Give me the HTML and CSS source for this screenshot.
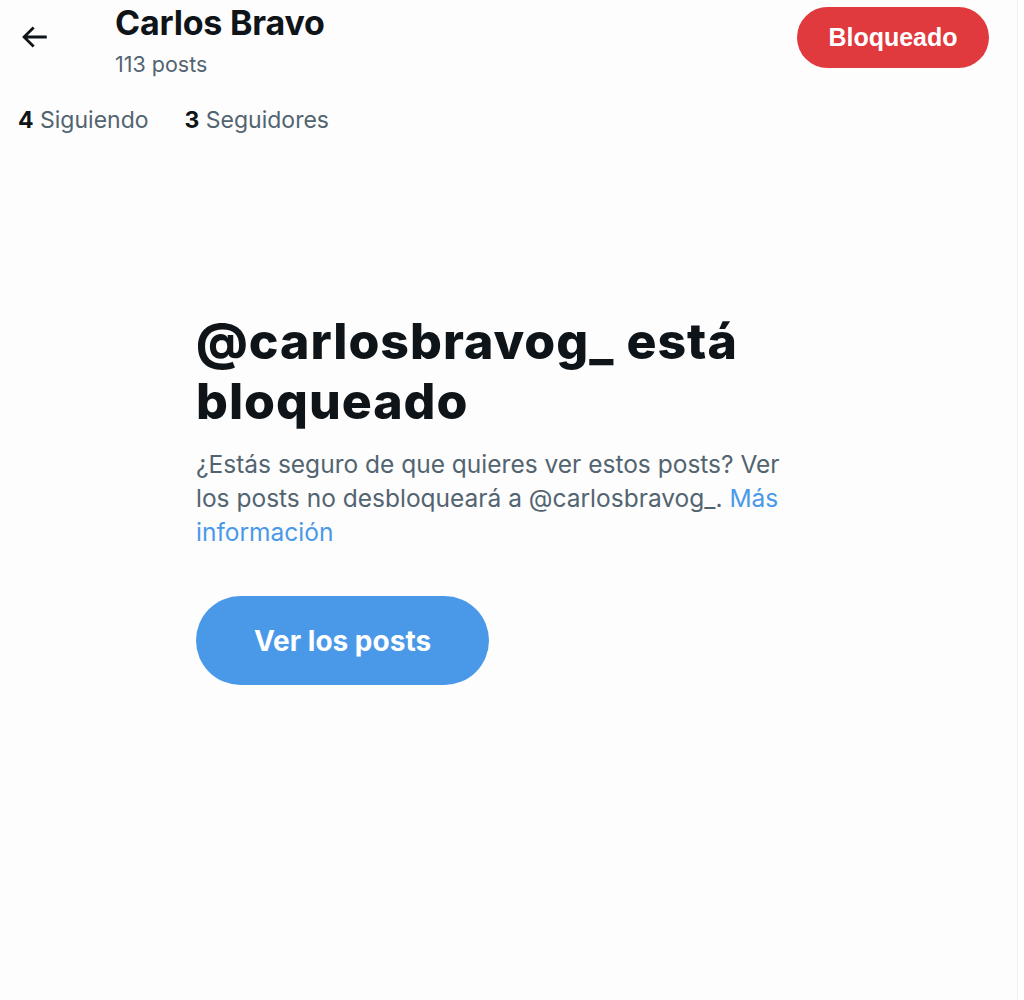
FILE: index.html
```html
<!DOCTYPE html>
<html lang="es">
  <head>
    <meta charset="UTF-8" />
    <meta name="viewport" content="width=device-width, initial-scale=1.0" />
    <title>Carlos Bravo</title>
    <link rel="stylesheet" href="styles.css">
  </head>

  <body>
    <main>
      <header class="top-bar">
        <button class="back" aria-label="Atrás">
          <svg viewBox="0 0 24 24" width="34" height="34">
            <path d="M7.414 13l5.043 5.04-1.414 1.42L3.586 12l7.457-7.46 1.414 1.42L7.414 11H21v2H7.414z"></path>
          </svg>
        </button>
        <div class="title">
          <h2>Carlos Bravo</h2>
          <span class="post-count">113 posts</span>
        </div>
        <button class="blocked">Bloqueado</button>
      </header>

      <div class="stats">
        <span><b>4</b> Siguiendo</span>
        <span><b>3</b> Seguidores</span>
      </div>

      <section class="empty-state">
        <h1>@carlosbravog_ está bloqueado</h1>
        <p>
          ¿Estás seguro de que quieres ver estos posts? Ver los posts no
          desbloqueará a @carlosbravog_. <a href="#">Más información</a>
        </p>
        <button class="view-posts">Ver los posts</button>
      </section>
    </main>
  </body>
</html>
```

FILE: styles.css
```css
body {
  margin: 0;
  background-color: #fff;
  color: #0f1419;
  font-family: Inter, "Liberation Sans", sans-serif;
}

main {
  width: 1018px;
  min-height: 1000px;
  box-sizing: border-box;
  border-right: 1px solid #eff1f2;
  background-color: #fdfdfd;
}

button {
  font-family: inherit;
  border: none;
  cursor: pointer;
}

.top-bar {
  display: flex;
  align-items: flex-start;
  padding: 7px 28px 0 16px;
  height: 80px;
  box-sizing: border-box;
}

.back {
  background: none;
  padding: 0;
  width: 36px;
  height: 36px;
  margin-top: 12px;
  display: flex;
  align-items: center;
  justify-content: center;
}

.back svg {
  fill: #0f1419;
}

.title {
  margin-left: 63px;
  display: flex;
  flex-direction: column;
}

.title h2 {
  margin: 0;
  font-size: 34px;
  line-height: 32px;
  font-weight: 700;
  letter-spacing: -0.2px;
}

.post-count {
  margin-top: 12px;
  color: #536471;
  font-size: 21.5px;
}

.blocked {
  margin-left: auto;
  width: 192px;
  height: 61px;
  border-radius: 31px;
  background-color: #e0393e;
  color: #fff;
  font-family: "Liberation Sans", Arial, sans-serif;
  font-size: 25px;
  font-weight: 700;
}

.stats {
  display: flex;
  gap: 36px;
  padding: 26px 0 0 18px;
  font-size: 23px;
  color: #536471;
}

.stats b {
  color: #0f1419;
}

.empty-state {
  margin: 177px 0 0 196px;
  max-width: 600px;
}

.empty-state h1 {
  margin: 0;
  font-size: 50px;
  line-height: 60px;
  font-weight: 800;
  letter-spacing: 1px;
}

.empty-state p {
  margin: 16px 0 0;
  font-size: 24.5px;
  line-height: 34px;
  color: #536471;
}

.empty-state a {
  color: #4a99e9;
  text-decoration: none;
}

.view-posts {
  margin-top: 47px;
  width: 293px;
  height: 89px;
  border-radius: 45px;
  background-color: #4a99e9;
  color: #fff;
  font-size: 28px;
  font-weight: 700;
}
```
